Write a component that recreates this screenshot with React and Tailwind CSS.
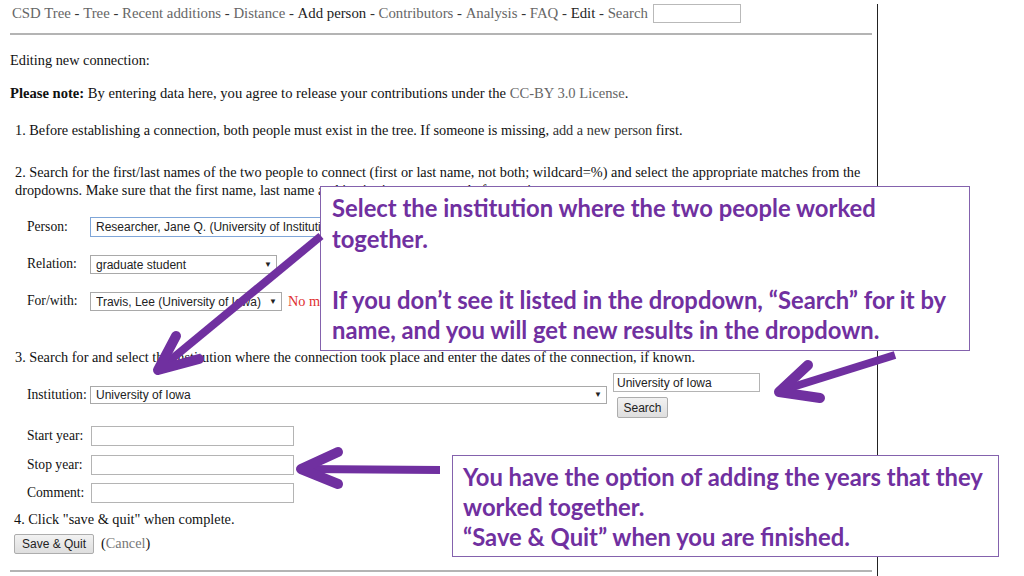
import React from "react";

const serif = { fontFamily: '"Liberation Serif", "Times New Roman", serif' };
const sans = { fontFamily: '"Liberation Sans", Arial, sans-serif' };
const callout = { fontFamily: 'Lato, "Open Sans", sans-serif' };

function Select({ width, text, focus }) {
  return (
    <div
      className={`flex items-center h-full bg-white border ${focus ? "border-[#7fa6d8]" : "border-[#a9a9a9]"} pl-[5px] pr-[4px] text-[12px] text-[#222] whitespace-nowrap`}
      style={{ ...sans, width }}
    >
      <span className="flex-1 min-w-0 overflow-hidden">{text}</span>
      {!focus && <span className="shrink-0 text-[8px] ml-[3px] text-[#222]">▼</span>}
    </div>
  );
}

function TextBox({ width, value }) {
  return (
    <div
      className="h-full bg-white border border-[#b4b4b4] pl-[3px] text-[12px] text-[#222] flex items-center"
      style={{ ...sans, width }}
    >
      {value}
    </div>
  );
}

function Btn({ children, width }) {
  return (
    <div
      className="h-full flex items-center justify-center border border-[#adadad] rounded-[2px] bg-gradient-to-b from-[#f2f2f2] to-[#dedede] text-[12px] text-[#222]"
      style={{ ...sans, width }}
    >
      {children}
    </div>
  );
}

function Sep() {
  return <span className="text-[#333] whitespace-pre"> - </span>;
}

function Label({ children, w = "w-[63px]" }) {
  return <div className={`${w} text-[13.6px] whitespace-nowrap`}>{children}</div>;
}

export default function App() {
  return (
    <div className="relative w-[1024px] h-[576px] bg-white overflow-hidden text-[14.3px] text-[#111]" style={serif}>
      <div className="w-[878px] h-full border-r border-[#222] pl-[10px] pr-[5px]">
        {/* nav */}
        <div className="mt-[4px] h-[19px] flex items-center pl-[2px] whitespace-nowrap text-[14.8px]">
          <span className="text-[#666]">CSD Tree</span>
          <Sep />
          <span className="text-[#666]">Tree</span>
          <Sep />
          <span className="text-[#666]">Recent additions</span>
          <Sep />
          <span className="text-[#666]">Distance</span>
          <Sep />
          <span className="text-[#222]">Add person</span>
          <Sep />
          <span className="text-[#666]">Contributors</span>
          <Sep />
          <span className="text-[#666]">Analysis</span>
          <Sep />
          <span className="text-[#666]">FAQ</span>
          <Sep />
          <span className="text-[#222]">Edit</span>
          <Sep />
          <span className="text-[#666]">Search</span>
          <div className="ml-[5px] w-[88px] h-[19px] border border-[#b9b9b9] bg-white" />
        </div>
        <div className="mt-[10px] h-[2px] bg-[#b4b4b4]" />

        <div className="mt-[17px] h-[16px] leading-[16px]">Editing new connection:</div>
        <div className="mt-[17px] h-[16px] leading-[16px] whitespace-nowrap text-[14.6px]">
          <b>Please note:</b> By entering data here, you agree to release your contributions under the{" "}
          <span className="text-[#666]">CC-BY 3.0 License</span>.
        </div>
        <div className="mt-[21px] h-[16px] leading-[16px] pl-[5px] whitespace-nowrap">
          1. Before establishing a connection, both people must exist in the tree. If someone is missing,{" "}
          <span className="text-[#333]">add a new person</span> first.
        </div>
        <div className="mt-[25px] leading-[18px] pl-[5px] whitespace-nowrap">
          <div>
            2. Search for the first/last names of the two people to connect (first or last name, not both; wildcard=%) and select the appropriate matches from the
          </div>
          <div>dropdowns. Make sure that the first name, last name and institution are correct before saving.</div>
        </div>

        {/* person rows */}
        <div className="mt-[18px] h-[20px] flex items-center pl-[17px]">
          <Label>Person:</Label>
          <Select width={530} text="Researcher, Jane Q. (University of Institution)" focus />
        </div>
        <div className="mt-[18px] h-[19px] flex items-center pl-[17px]">
          <Label>Relation:</Label>
          <Select width={187} text="graduate student" />
        </div>
        <div className="mt-[18px] h-[19px] flex items-center pl-[17px]">
          <Label>For/with:</Label>
          <Select width={192} text="Travis, Lee (University of Iowa)" />
          <span className="ml-[6px] text-[#e03030] whitespace-nowrap">No matches</span>
        </div>

        <div className="mt-[38px] h-[16px] leading-[16px] pl-[5px] whitespace-nowrap">
          3. Search for and select the institution where the connection took place and enter the dates of the connection, if known.
        </div>

        {/* institution */}
        <div className="mt-[8px] h-[45px] flex pl-[17px]">
          <div className="mt-[13px] h-[18px] flex items-center">
            <Label>Institution:</Label>
            <Select width={517} text="University of Iowa" />
          </div>
          <div className="ml-[6px] flex flex-col">
            <div className="h-[19px]">
              <TextBox width={147} value="University of Iowa" />
            </div>
            <div className="mt-[5px] h-[21px] ml-[4px]">
              <Btn width={51}>Search</Btn>
            </div>
          </div>
        </div>

        <div className="mt-[8px] h-[20px] flex items-center pl-[17px]">
          <Label w="w-[64px]">Start year:</Label>
          <TextBox width={203} />
        </div>
        <div className="mt-[9px] h-[20px] flex items-center pl-[17px]">
          <Label w="w-[64px]">Stop year:</Label>
          <TextBox width={203} />
        </div>
        <div className="mt-[8px] h-[20px] flex items-center pl-[17px]">
          <Label w="w-[64px]">Comment:</Label>
          <TextBox width={203} />
        </div>
        <div className="mt-[8px] h-[16px] leading-[16px] pl-[4px]">4. Click "save &amp; quit" when complete.</div>
        <div className="mt-[7px] h-[20px] flex items-center pl-[4px]">
          <Btn width={80}>Save &amp; Quit</Btn>
          <span className="ml-[7px]">
            (<span className="text-[#777]">Cancel</span>)
          </span>
        </div>
        <div className="mt-[16px] h-[2px] bg-[#b4b4b4]" />
      </div>

      {/* callout 1 */}
      <div
        className="absolute left-[320px] top-[186px] w-[650px] h-[165px] bg-white border border-[#8462ad] pl-[11px] pt-[6px] text-[23.8px] leading-[30.5px] font-bold text-[#7030a0] whitespace-nowrap"
        style={callout}
      >
        <div>Select the institution where the two people worked</div>
        <div>together.</div>
        <div>&nbsp;</div>
        <div>If you don’t see it listed in the dropdown, “Search” for it by</div>
        <div>name, and you will get new results in the dropdown.</div>
      </div>

      {/* callout 2 */}
      <div
        className="absolute left-[452px] top-[455px] w-[547px] h-[102px] bg-white border border-[#8462ad] pl-[10px] pt-[6px] text-[23.8px] leading-[30px] font-bold text-[#7030a0] whitespace-nowrap"
        style={callout}
      >
        <div>You have the option of adding the years that they</div>
        <div>worked together.</div>
        <div>“Save &amp; Quit” when you are finished.</div>
      </div>

      {/* arrows */}
      <svg className="absolute left-0 top-0 pointer-events-none" width="1024" height="576" viewBox="0 0 1024 576">
        <g stroke="#7030a0" fill="none" strokeLinejoin="round">
          <line x1="321" y1="236" x2="162" y2="367" strokeWidth="8" />
          <polyline points="176,336 158,370 199,359" strokeWidth="10" strokeLinecap="round" />

          <line x1="895" y1="355" x2="783" y2="390" strokeWidth="8" />
          <polyline points="808,365 779,392 820,398" strokeWidth="10" strokeLinecap="round" />

          <line x1="440" y1="470" x2="304" y2="469" strokeWidth="8" />
          <polyline points="338,452 301,469 338,484" strokeWidth="10" strokeLinecap="round" />
        </g>
      </svg>
    </div>
  );
}
